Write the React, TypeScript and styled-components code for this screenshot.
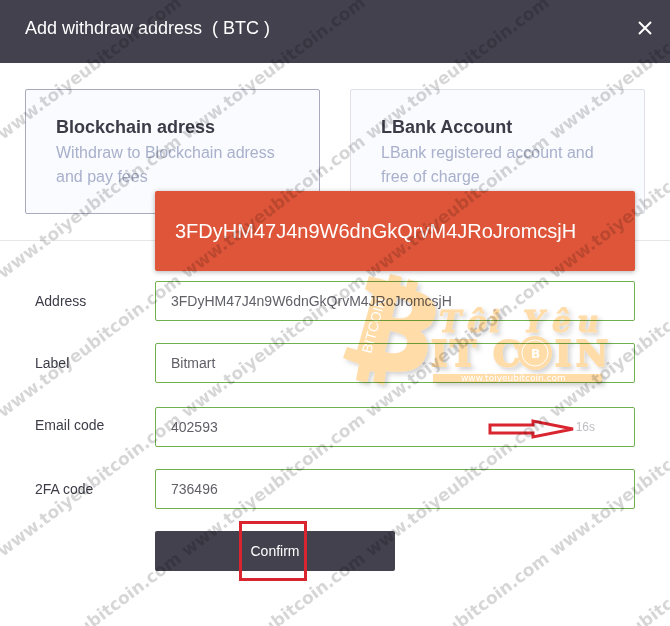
import React from "react";
import styled, { createGlobalStyle } from "styled-components";

const GlobalStyle = createGlobalStyle`
  *, *::before, *::after { box-sizing: border-box; }
  body {
    margin: 0;
    background: #fff;
    color: #3c3c48;
    font-family: "Liberation Sans", Arial, sans-serif;
    font-size: 14px;
  }
  button, input { font: inherit; }
`;

const Page = styled.div`
  position: relative;
  min-height: 100vh;
  overflow: hidden;
`;

const Header = styled.header`
  display: flex;
  align-items: center;
  justify-content: space-between;
  height: 63px;
  padding: 0 12px 8px 25px;
  background: #42414d;
  color: #fff;
`;

const Title = styled.h1`
  margin: 0;
  font-size: 18px;
  font-weight: 400;
  line-height: 24px;
  white-space: pre;
`;

const CloseButton = styled.button`
  display: flex;
  padding: 2px;
  border: 0;
  background: none;
  color: #fff;
  cursor: pointer;
`;

const Options = styled.section`
  display: grid;
  grid-template-columns: 1fr 1fr;
  gap: 30px;
  padding: 26px 25px;
  border-bottom: 1px solid #e6e6e8;
`;

const OptionCard = styled.button<{ $active?: boolean }>`
  display: flex;
  flex-direction: column;
  align-items: flex-start;
  padding: 24px 30px;
  border: 1px solid ${(p) => (p.$active ? "#a9aac0" : "#dfe0ea")};
  border-radius: 2px;
  background: #f9fbff;
  text-align: left;
  cursor: pointer;
`;

const OptionTitle = styled.strong`
  color: #3c3c48;
  font-size: 18px;
  line-height: 27px;
`;

const OptionText = styled.span`
  color: #a9b0cb;
  font-size: 16px;
  line-height: 24px;
`;

const Form = styled.form`
  position: relative;
  display: flex;
  flex-direction: column;
  gap: 22px;
  padding: 40px 35px;
`;

const Row = styled.div<{ $tall?: boolean }>`
  display: grid;
  grid-template-columns: 120px 1fr;
  align-items: end;
  min-height: ${(p) => (p.$tall ? "42px" : "40px")};
`;

const Label = styled.label`
  align-self: start;
  line-height: 40px;
`;

const Field = styled.div`
  position: relative;
`;

const Input = styled.input`
  display: block;
  width: 100%;
  height: 40px;
  padding: 0 15px;
  border: 1px solid #6fb04f;
  border-radius: 2px;
  outline: 0;
  background: #fff;
  color: #606068;
`;

const Toast = styled.div`
  position: absolute;
  right: 0;
  bottom: calc(100% + 10px);
  left: 0;
  padding: 0 20px;
  border-radius: 2px;
  background: #df5539;
  box-shadow: 0 1px 5px rgba(0, 0, 0, 0.3);
  color: #fff;
  font-size: 20px;
  line-height: 80px;
`;

const Countdown = styled.span`
  position: absolute;
  top: 0;
  right: 40px;
  color: #bdbdc3;
  font-size: 12px;
  line-height: 40px;
`;

const Arrow = styled.svg`
  position: absolute;
  top: 12px;
  right: 58px;
`;

const ConfirmButton = styled.button`
  position: relative;
  grid-column: 2;
  width: 50%;
  height: 40px;
  border: 0;
  border-radius: 2px;
  background: #42414d;
  color: #fff;
  cursor: pointer;
`;

const Highlight = styled.span`
  position: absolute;
  top: -10px;
  bottom: -10px;
  left: 84px;
  width: 68px;
  border: 3px solid #d9252f;
`;

const Logo = styled.svg`
  position: absolute;
  top: 29px;
  left: 340px;
  mix-blend-mode: multiply;
  pointer-events: none;
`;

const Watermark = styled.svg`
  position: absolute;
  inset: 0;
  width: 100%;
  height: 100%;
  pointer-events: none;
`;

const bodyPath =
  "M29 6L48 11L50 4L62 7L60 15L66 17L68 9L78 12L76 21C92 26 98 36 95 46C93 55 87 59 80 61C88 67 90 78 85 88C80 99 70 104 46 101L44 115L33 112L35 102L30 101L27 113L16 110L19 94L3 88L7 77L17 80L33 24L25 19Z" +
  "M57 28L52 47C62 50 70 48 72 40C74 32 66 30 57 28Z" +
  "M50 61L45 82C56 85 65 83 67 74C69 66 61 63 50 61Z";

const scriptLetters: [string, number][] = [
  ["T", 99],
  ["ô", 127],
  ["i", 149],
  ["Y", 183],
  ["ê", 212],
  ["u", 237],
];

const brandLetters: [string, number][] = [
  ["I", 91],
  ["T", 110],
  ["C", 153],
  ["I", 215],
  ["N", 236],
];

function BrandLogo() {
  return (
    <Logo width="280" height="120" viewBox="0 0 280 120" aria-hidden="true">
      <defs>
        <filter id="soft" x="-10%" y="-10%" width="125%" height="125%">
          <feDropShadow dx="3" dy="3" stdDeviation="2" floodColor="#555" floodOpacity="0.25" />
        </filter>
      </defs>
      <g fill="#ffdca8" stroke="#ffdca8" strokeWidth="0" filter="url(#soft)">
        <path d={bodyPath} fillRule="evenodd" />
        <g fontFamily="DejaVu Serif" fontWeight="700" fontStyle="italic" fontSize="30" strokeWidth="1">
          {scriptLetters.map(([letter, x]) => (
            <text key={x} x={x} y="62">
              {letter}
            </text>
          ))}
        </g>
        <g fontFamily="DejaVu Serif" fontWeight="700" fontSize="35" strokeWidth="2">
          {brandLetters.map(([letter, x]) => (
            <text key={x} x={x} y="96">
              {letter}
            </text>
          ))}
        </g>
        <circle cx="195" cy="83" r="17" />
        <rect x="93" y="104" width="169" height="9" />
      </g>
      <circle cx="195" cy="83" r="13" fill="none" stroke="#fff" strokeWidth="1" />
      <g fill="#fff" fontFamily="DejaVu Sans">
        <text x="191" y="88" fontSize="12" fontWeight="700">
          B
        </text>
        <text x="121" y="111" fontSize="9">
          www.toiyeubitcoin.com
        </text>
        <text transform="translate(31 84) rotate(-75)" fontFamily="Liberation Sans" fontSize="14">
          BITCOIN
        </text>
      </g>
    </Logo>
  );
}

const tiles = Array.from({ length: 5 }, (_, row) =>
  Array.from({ length: 4 }, (_, col) => ({ x: col * 184 + 3, y: (row + 1) * 139 + 1 }))
).flat();

function SiteWatermark() {
  return (
    <Watermark aria-hidden="true">
      <g fill="#000" fillOpacity="0.16" fontFamily="DejaVu Sans" fontWeight="700" fontSize="17">
        {tiles.map(({ x, y }) => (
          <text key={`${x}-${y}`} transform={`translate(${x} ${y}) rotate(-37)`}>
            www.toiyeubitcoin.com
          </text>
        ))}
      </g>
    </Watermark>
  );
}

export default function App() {
  const address = "3FDyHM47J4n9W6dnGkQrvM4JRoJromcsjH";
  return (
    <>
      <GlobalStyle />
      <Page>
        <Header>
          <Title>{"Add withdraw address  ( BTC )"}</Title>
          <CloseButton type="button" aria-label="Close">
            <svg width="22" height="22" viewBox="0 0 22 22" fill="none" stroke="currentColor" strokeWidth="2">
              <path d="M5 5L17 17M17 5L5 17" />
            </svg>
          </CloseButton>
        </Header>
        <Options>
          <OptionCard type="button" $active>
            <OptionTitle>Blockchain adress</OptionTitle>
            <OptionText>Withdraw to Blockchain adress and pay fees</OptionText>
          </OptionCard>
          <OptionCard type="button">
            <OptionTitle>LBank Account</OptionTitle>
            <OptionText>LBank registered account and free of charge</OptionText>
          </OptionCard>
        </Options>
        <Form onSubmit={(e: React.FormEvent) => e.preventDefault()}>
          <Row>
            <Label htmlFor="address">Address</Label>
            <Field>
              <Toast role="alert">{address}</Toast>
              <Input id="address" defaultValue={address} />
            </Field>
          </Row>
          <Row>
            <Label htmlFor="label">Label</Label>
            <Field>
              <Input id="label" defaultValue="Bitmart" />
            </Field>
          </Row>
          <Row $tall>
            <Label htmlFor="email-code">Email code</Label>
            <Field>
              <Input id="email-code" defaultValue="402593" />
              <Countdown>16s</Countdown>
              <Arrow width="90" height="20" viewBox="0 0 90 20" fill="none" stroke="#d9252f" strokeWidth="3">
                <path d="M3 6H46V2L86 10L46 18V14H3Z" />
              </Arrow>
            </Field>
          </Row>
          <Row>
            <Label htmlFor="two-factor">2FA code</Label>
            <Field>
              <Input id="two-factor" defaultValue="736496" />
            </Field>
          </Row>
          <Row>
            <ConfirmButton type="submit">
              Confirm
              <Highlight />
            </ConfirmButton>
          </Row>
          <BrandLogo />
        </Form>
        <SiteWatermark />
      </Page>
    </>
  );
}
